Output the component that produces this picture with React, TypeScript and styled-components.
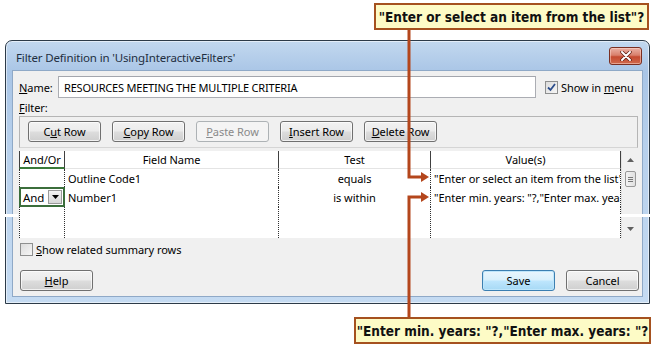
import React from "react";
import styled, { createGlobalStyle, css } from "styled-components";

const Global = createGlobalStyle`
  html, body { margin: 0; padding: 0; background: #ffffff; }
  body { font-family: "Noto Sans", "Open Sans", sans-serif; }
`;

const UI = `"Noto Sans", "Open Sans", sans-serif`;

const Page = styled.div`
  position: relative;
  width: 655px;
  height: 345px;
  overflow: hidden;
  background: #fff;
  padding: 40px 0 0 5px;
  box-sizing: border-box;
`;

const Window = styled.div`
  width: 645px;
  height: 264px;
  box-sizing: border-box;
  border: 1px solid #2c3a48;
  border-radius: 7px 7px 0 0;
  background: linear-gradient(180deg, #c2d8ef 0%, #a9c5e6 12%, #b7d0ec 40%, #c5dbf2 100%);
  display: flex;
  flex-direction: column;
  box-shadow: inset 0 0 0 1px rgba(255,255,255,0.55);
`;

const TitleBar = styled.div`
  height: 29px;
  display: flex;
  align-items: center;
  padding: 0 7px 0 10px;
  flex: none;
`;

const Title = styled.div`
  flex: 1;
  font-family: ${UI};
  font-size: 11.5px;
  letter-spacing: -0.15px;
  color: #1e2e40;
  padding-top: 4px;
`;

const CloseBtn = styled.div`
  width: 31px;
  height: 16px;
  margin-top: 1px;
  border: 1px solid #7a2f22;
  border-radius: 3px;
  background: linear-gradient(180deg, #eab0a4 0%, #d9806c 45%, #c54a30 55%, #d06a4e 100%);
  display: flex;
  align-items: center;
  justify-content: center;
  box-shadow: inset 0 0 0 1px rgba(255,220,210,0.5);
`;

const Client = styled.div`
  flex: 1;
  margin: 0 6px 6px 6px;
  background: #f0f0f0;
  border: 1px solid #8fa9c7;
  display: flex;
  flex-direction: column;
  padding: 5px 5px 0 6px;
  font-family: ${UI};
  font-size: 11px;
  letter-spacing: -0.05px;
  color: #000;
`;

const NameRow = styled.div`
  display: flex;
  align-items: center;
  height: 22px;
`;

const Label = styled.span`
  width: 39px;
  flex: none;
  u { text-decoration: underline; }
`;

const TextInput = styled.div`
  width: 478px;
  height: 22px;
  box-sizing: border-box;
  border: 1px solid #abadb3;
  border-top-color: #a3a6ad;
  background: #fff;
  display: flex;
  align-items: center;
  padding-left: 5px;
  letter-spacing: -0.2px;
  white-space: nowrap;
`;

const CheckLabel = styled.label`
  display: flex;
  align-items: center;
  gap: 3px;
  white-space: nowrap;
`;

const InMenu = styled(CheckLabel)`
  margin-left: 9px;
`;

const Box = styled.span`
  width: 13px;
  height: 13px;
  box-sizing: border-box;
  border: 1px solid #8e8f8f;
  background: linear-gradient(135deg, #dcdcdc 0%, #f6f6f6 100%);
  display: inline-flex;
  align-items: center;
  justify-content: center;
  flex: none;
`;

const FilterLabel = styled.div`
  height: 17px;
  line-height: 17px;
  margin-top: 1px;
`;

const Toolbar = styled.div`
  height: 32px;
  width: 619px;
  box-sizing: border-box;
  border: 1px solid #b5b5b5;
  border-bottom-color: #d5d5d5;
  display: flex;
  align-items: center;
  gap: 11px;
  padding: 0 0 2px 8px;
`;

const Btn = styled.div<{ $disabled?: boolean; $default?: boolean }>`
  width: 73px;
  height: 21px;
  box-sizing: border-box;
  border: 1px solid #707070;
  border-radius: 3px;
  background: linear-gradient(180deg, #f2f2f2 0%, #ebebeb 48%, #dddddd 52%, #cfcfcf 100%);
  box-shadow: inset 0 0 0 1px rgba(255,255,255,0.7);
  display: flex;
  align-items: center;
  justify-content: center;
  color: #000;
  white-space: nowrap;
  u { text-decoration: underline; }
  ${(p) =>
    p.$disabled &&
    css`
      border-color: #adb2b5;
      background: #f4f4f4;
      color: #8a8a8a;
      box-shadow: none;
    `}
  ${(p) =>
    p.$default &&
    css`
      border-color: #3c7fb1;
      background: linear-gradient(180deg, #eaf6fd 0%, #d9f0fc 48%, #bee6fd 52%, #a7d9f5 100%);
      box-shadow: inset 0 0 0 1px #bfe6fb;
    `}
`;

const Grid = styled.div`
  margin-top: 3px;
  width: 619px;
  height: 87px;
  display: flex;
  background: #fff;
`;

const Cols = styled.div`
  flex: 1;
  display: grid;
  grid-template-columns: 46px 214px 152px 190px;
  grid-template-rows: 18px 18px 20px 1fr;
`;

const Head = styled.div<{ $sel?: boolean; $first?: boolean }>`
  display: flex;
  align-items: center;
  justify-content: center;
  border-right: 1px solid #404040;
  border-left: ${(p) => (p.$first ? "1px solid #404040" : "none")};
  border-bottom: ${(p) => (p.$sel ? "2px solid #3b7a3b" : "1px solid #e4e4e4")};
  box-sizing: border-box;
  background: #fff;
`;

const Cell = styled.div<{ $align?: "left" | "center"; $first?: boolean }>`
  display: flex;
  align-items: center;
  justify-content: ${(p) => (p.$align === "center" ? "center" : "flex-start")};
  padding-left: ${(p) => (p.$align === "center" ? "0" : "3px")};
  border-right: 1px dotted #303030;
  border-left: ${(p) => (p.$first ? "1px dotted #303030" : "none")};
  box-sizing: border-box;
  white-space: nowrap;
  overflow: hidden;
`;

const SelCell = styled.div`
  display: flex;
  align-items: center;
  justify-content: space-between;
  border: 2px solid #3b6e3b;
  box-sizing: border-box;
  padding: 0 1px 0 2px;
  font-size: 11.5px;
`;

const DropBtn = styled.span`
  width: 14px;
  height: 14px;
  box-sizing: border-box;
  border: 1px solid #9a9a9a;
  background: linear-gradient(180deg, #f4f4f4, #d8d8d8);
  display: inline-flex;
  align-items: center;
  justify-content: center;
`;

const Scroll = styled.div`
  width: 17px;
  display: flex;
  flex-direction: column;
  align-items: center;
  background: #f0f0f0;
  border-left: 1px solid #e2e2e2;
  box-sizing: border-box;
`;

const Arrow = styled.div`
  height: 18px;
  display: flex;
  align-items: center;
  justify-content: center;
`;

const Thumb = styled.div`
  width: 11px;
  height: 16px;
  margin-top: 2px;
  border: 1px solid #989898;
  border-radius: 2px;
  background: linear-gradient(90deg, #f3f3f3, #e0e0e0);
  box-sizing: border-box;
  display: flex;
  align-items: center;
  justify-content: center;
`;

const Track = styled.div`
  flex: 1;
`;

const SummaryRow = styled(CheckLabel)`
  margin-top: 5px;
  margin-left: 1px;
  height: 13px;
  u { text-decoration: underline; }
`;

const Footer = styled.div`
  margin-top: 14px;
  display: flex;
  align-items: center;
  gap: 11px;
  padding-left: 1px;
  width: 619px;
`;

const Spacer = styled.div`
  flex: 1;
`;

const Glitch = styled.div<{ $left: number; $width: number }>`
  position: absolute;
  top: 214px;
  height: 3px;
  left: ${(p) => p.$left}px;
  width: ${(p) => p.$width}px;
  background: #fff;
`;

const Callout = styled.div<{ $left: number; $top: number; $width: number }>`
  position: absolute;
  left: ${(p) => p.$left}px;
  top: ${(p) => p.$top}px;
  width: ${(p) => p.$width}px;
  height: 27px;
  box-sizing: border-box;
  border: 2px solid #a5511f;
  background: #fdfbc6;
  display: flex;
  align-items: center;
  justify-content: center;
  font-family: "DejaVu Sans Condensed", "DejaVu Sans", sans-serif;
  font-weight: bold;
  font-size: 13.5px;
  color: #111;
  white-space: nowrap;
`;

const Connectors = styled.svg`
  position: absolute;
  left: 0;
  top: 0;
  pointer-events: none;
`;

const Check = () => (
  <svg width="9" height="9" viewBox="0 0 9 9">
    <path d="M1 4.5 L3.5 7 L8 1" fill="none" stroke="#2b4d8c" strokeWidth="1.8" />
  </svg>
);

const Down = ({ c = "#000" }: { c?: string }) => (
  <svg width="7" height="4" viewBox="0 0 7 4">
    <path d="M0 0 H7 L3.5 4 Z" fill={c} />
  </svg>
);

const Up = () => (
  <svg width="7" height="4" viewBox="0 0 7 4">
    <path d="M0 4 H7 L3.5 0 Z" fill="#606060" />
  </svg>
);

export default function App() {
  return (
    <>
      <Global />
      <Page>
        <Window>
          <TitleBar>
            <Title>Filter Definition in 'UsingInteractiveFilters'</Title>
            <CloseBtn>
              <svg width="12" height="10" viewBox="0 0 12 10">
                <path d="M2 1 L10 9 M10 1 L2 9" stroke="#5a1a10" strokeWidth="3.4" strokeLinecap="round" />
                <path d="M2 1 L10 9 M10 1 L2 9" stroke="#ffffff" strokeWidth="2" strokeLinecap="round" />
              </svg>
            </CloseBtn>
          </TitleBar>
          <Client>
            <NameRow>
              <Label>
                <u>N</u>ame:
              </Label>
              <TextInput>RESOURCES MEETING THE MULTIPLE CRITERIA</TextInput>
              <InMenu>
                <Box>
                  <Check />
                </Box>
                <span>
                  Show in <u>m</u>enu
                </span>
              </InMenu>
            </NameRow>
            <FilterLabel>
              <u>F</u>ilter:
            </FilterLabel>
            <Toolbar>
              <Btn>
                C<u>u</u>t Row
              </Btn>
              <Btn>
                <u>C</u>opy Row
              </Btn>
              <Btn $disabled>
                <u>P</u>aste Row
              </Btn>
              <Btn>
                <u>I</u>nsert Row
              </Btn>
              <Btn>
                <u>D</u>elete Row
              </Btn>
            </Toolbar>
            <Grid>
              <Cols>
                <Head $sel $first>And/Or</Head>
                <Head>Field Name</Head>
                <Head>Test</Head>
                <Head>Value(s)</Head>

                <Cell $first />
                <Cell>Outline Code1</Cell>
                <Cell $align="center">equals</Cell>
                <Cell>"Enter or select an item from the list"?</Cell>

                <SelCell>
                  <span>And</span>
                  <DropBtn>
                    <Down />
                  </DropBtn>
                </SelCell>
                <Cell>Number1</Cell>
                <Cell $align="center">is within</Cell>
                <Cell>"Enter min. years: "?,"Enter max. years: "?</Cell>

                <Cell $first />
                <Cell />
                <Cell />
                <Cell />
              </Cols>
              <Scroll>
                <Arrow>
                  <Up />
                </Arrow>
                <Thumb>
                  <svg width="5" height="5" viewBox="0 0 5 5">
                    <path d="M0 0.5H5M0 2.5H5M0 4.5H5" stroke="#777" strokeWidth="1" />
                  </svg>
                </Thumb>
                <Track />
                <Arrow>
                  <Down c="#606060" />
                </Arrow>
              </Scroll>
            </Grid>
            <SummaryRow>
              <Box />
              <span>
                <u>S</u>how related summary rows
              </span>
            </SummaryRow>
            <Footer>
              <Btn>
                <u>H</u>elp
              </Btn>
              <Spacer />
              <Btn $default>Save</Btn>
              <Btn>Cancel</Btn>
            </Footer>
          </Client>
        </Window>

        <Glitch $left={0} $width={18} />
        <Glitch $left={620} $width={35} />

        <Connectors width="655" height="345" viewBox="0 0 655 345">
          <path d="M409 30 V177 H423" fill="none" stroke="#b4461c" strokeWidth="3" />
          <path d="M421 172 L429 177 L421 182 Z" fill="#b4461c" />
          <path d="M409 318 V197 H423" fill="none" stroke="#b4461c" strokeWidth="3" />
          <path d="M421 192 L429 197 L421 202 Z" fill="#b4461c" />
        </Connectors>

        <Callout $left={374} $top={3} $width={275}>
          "Enter or select an item from the list"?
        </Callout>
        <Callout $left={354} $top={317} $width={297}>
          "Enter min. years: "?,"Enter max. years: "?
        </Callout>
      </Page>
    </>
  );
}
